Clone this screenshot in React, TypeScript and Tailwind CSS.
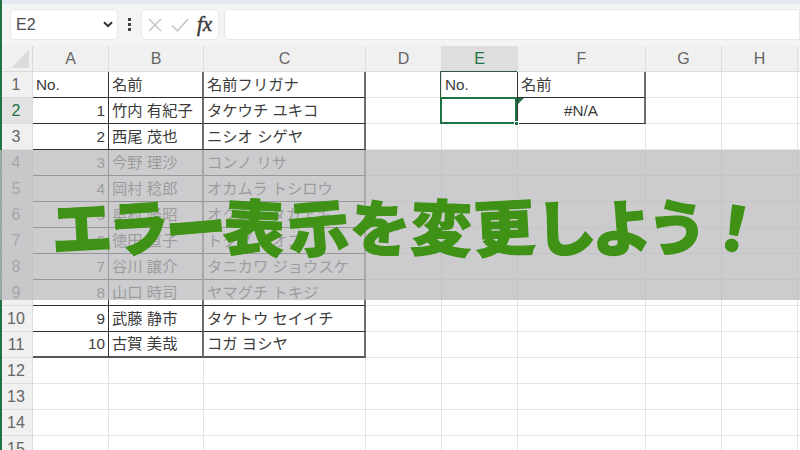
const COLS = [76, 95, 162, 76, 76, 128, 76, 76, 76];
const LETTERS = ["A", "B", "C", "D", "E", "F", "G", "H", ""];
const FONT = "font-['Liberation_Sans','Noto_Sans_CJK_JP',sans-serif]";

type Row = [string, string, string];
const DATA: Row[] = [
  ["No.", "名前", "名前フリガナ"],
  ["1", "竹内 有紀子", "タケウチ ユキコ"],
  ["2", "西尾 茂也", "ニシオ シゲヤ"],
  ["3", "今野 理沙", "コンノ リサ"],
  ["4", "岡村 稔郎", "オカムラ トシロウ"],
  ["5", "奥村 隆昭", "オクムラ タカアキ"],
  ["6", "徳田 直子", "トクダ ナオコ"],
  ["7", "谷川 譲介", "タニカワ ジョウスケ"],
  ["8", "山口 時司", "ヤマグチ トキジ"],
  ["9", "武藤 静市", "タケトウ セイイチ"],
  ["10", "古賀 美哉", "コガ ヨシヤ"],
];

const TITLE: [string, string][] = [
  ["エ", "w-[57px] rotate-[-3deg]"],
  ["ラ", "w-[57px] rotate-[-4deg]"],
  ["ー", "w-[57px] rotate-[-5deg]"],
  ["表", "w-[64px] rotate-[3deg]"],
  ["示", "w-[64px] rotate-[-5deg]"],
  ["を", "w-[60px] rotate-[4deg]"],
  ["変", "w-[63px] rotate-[2deg]"],
  ["更", "w-[62px] rotate-[-3deg]"],
  ["し", "w-[56px] rotate-[-3deg]"],
  ["よ", "w-[56px] rotate-[-3deg]"],
  ["う", "w-[58px] rotate-[6deg]"],
  ["！", "w-[60px] rotate-[10deg]"],
];

function Cell({ r, c }: { r: number; c: number }) {
  const inTable = r < 11 && c < 3;
  const inLookup = r < 2 && (c === 4 || c === 5);
  let text = "";
  if (inTable) text = DATA[r][c];
  if (inLookup && r === 0) text = c === 4 ? "No." : "名前";
  if (r === 1 && c === 5) text = "#N/A";
  const right = inTable && c === 0 && r > 0;
  const center = r === 1 && c === 5;
  const lined = inTable || inLookup;
  const grayEdge = (inTable && c >= 1) || (inLookup && c === 5);
  const borderR = !lined ? "border-r border-[#e4e4e4]" : grayEdge ? "border-r-2 border-[#6e6e6e]" : "border-r border-[#333]";
  const borderB = lined ? (r === 10 ? "border-b-2 border-b-[#555]" : "border-b border-b-[#2e2e2e]") : "border-b border-b-[#e4e4e4]";
  return (
    <div
      className={`relative flex items-center overflow-hidden whitespace-nowrap pt-px pr-[3px] pl-[3px] text-[15.3px] text-[#3c3c3c] ${borderR} ${borderB} ${
        right ? "justify-end" : center ? "justify-center" : "justify-start"
      }`}
    >
      {text}
    </div>
  );
}

export default function App() {
  const rows = Array.from({ length: 15 }, (_, i) => i);
  return (
    <div className={`relative h-[450px] w-[800px] overflow-hidden bg-white ${FONT}`}>
      <div className="h-[4px] bg-[#e4e8f0]" />
      <div className="flex h-[42px] items-start bg-[#f3f4f6] pt-[5px] pl-[10px]">
        <div className="flex h-[31px] w-[108px] items-center justify-between rounded-[5px] border border-[#e8e8e8] bg-white pr-[4px] pl-[5px] text-[16px] text-[#4a4a4a]">
          <span>E2</span>
          <svg width="10" height="7" viewBox="0 0 10 7" fill="none" stroke="#333" strokeWidth="2">
            <path d="M1 1.2 5 5.2 9 1.2" />
          </svg>
        </div>
        <div className="flex h-[31px] w-[23px] flex-col items-center justify-center gap-[2px]">
          <span className="size-[3px] bg-[#444]" />
          <span className="size-[3px] bg-[#444]" />
          <span className="size-[3px] bg-[#444]" />
        </div>
        <div className="flex h-[31px] w-[78px] items-center rounded-[5px] border border-[#e8e8e8] bg-white pl-[6px]">
          <svg width="14" height="14" viewBox="0 0 14 14" fill="none" stroke="#c0c0c0" strokeWidth="1.4">
            <path d="M1 1 13 13M13 1 1 13" />
          </svg>
          <svg className="ml-[9px]" width="18" height="14" viewBox="0 0 18 14" fill="none" stroke="#c0c0c0" strokeWidth="1.4">
            <path d="M1 7.5 6.5 13 17 1" />
          </svg>
          <span className="ml-[8px] font-['Liberation_Serif',serif] text-[21px] leading-none font-normal text-[#3c3c3c] italic [-webkit-text-stroke:0.5px_#3c3c3c]">fx</span>
        </div>
        <div className="ml-[5px] h-[31px] flex-1 rounded-l-[5px] border border-[#e8e8e8] bg-white" />
      </div>

      <div className="grid grid-cols-[33px_76px_95px_162px_76px_76px_128px_76px_76px_76px] grid-rows-[26px_repeat(15,26px)]">
        <div className="flex items-end justify-end border-r border-b border-[#d8d8d8] bg-[#f0f0f0] pr-[3px] pb-[3px]">
          <div className="size-0 border-t-[18px] border-r-[18px] border-t-transparent border-r-[#dcdcdc]" />
        </div>
        {LETTERS.map((l, i) => (
          <div
            key={i}
            className={`flex items-center justify-center border-r border-b border-[#dcdcdc] text-[16px] ${
              i === 4 ? "bg-[#dedede] text-[#217346]" : "bg-[#f0f0f0] text-[#666]"
            }`}
          >
            {l}
          </div>
        ))}
        {rows.map((r) => [
          <div
            key={`h${r}`}
            className={`flex items-center justify-center border-r border-b border-[#dcdcdc] text-[16px] ${
              r === 1 ? "bg-[#e2e2e2] text-[#217346]" : "bg-[#f0f0f0] text-[#666]"
            }`}
          >
            {r + 1}
          </div>,
          ...COLS.map((_, c) => <Cell key={`${r}-${c}`} r={r} c={c} />),
        ])}
      </div>

      {/* lookup table top and left edge */}
      <div className="absolute top-[71px] left-[440px] h-[26px] w-[77px] border-t border-l border-[#2e5a40]" />
      {/* active cell E2 */}
      <div className="absolute top-[97px] left-[440px] h-[27px] w-[77px] border-2 border-[#1f7244]" />
      <div className="absolute top-[121px] left-[514px] size-[5px] border border-white bg-[#1f7244]" />
      <div className="absolute top-[98px] left-[518px] size-0 border-t-[6px] border-r-[6px] border-t-[#1f7244] border-r-transparent" />
      {/* green window edge */}
      <div className="absolute top-0 left-0 h-full w-[2px] bg-[#217346]" />

      {/* title band */}
      <div className="absolute top-[150px] left-0 flex h-[150px] w-full items-center bg-[#bbbbbe]/75 pb-[2px] pl-[51px]">
        {TITLE.map(([ch, cls], i) => (
          <span
            key={i}
            className={`inline-block text-center font-['Noto_Sans_CJK_JP',sans-serif] text-[61px] leading-none font-black text-[#3f9216] [-webkit-text-stroke:1.2px_#3f9216] ${cls}`}
          >
            {ch}
          </span>
        ))}
      </div>
    </div>
  );
}
